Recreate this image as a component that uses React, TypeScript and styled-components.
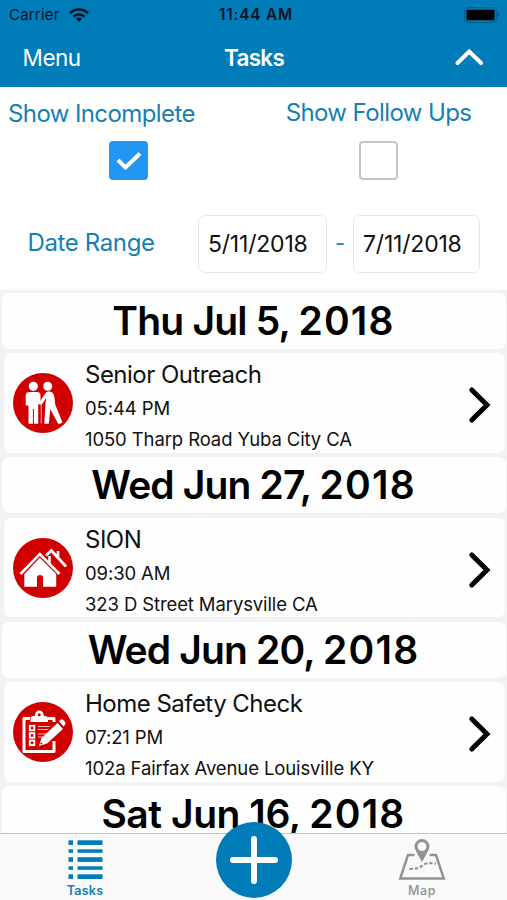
import React from "react";
import styled, { createGlobalStyle } from "styled-components";

const BLUE = "#007cb8";
const RED = "#d00000";

const GlobalStyle = createGlobalStyle`
  * { box-sizing: border-box; }
  body {
    margin: 0;
    background: #fff;
    color: #111;
    font-family: Inter, "Liberation Sans", sans-serif;
  }
`;

const Screen = styled.div`
  display: flex;
  flex-direction: column;
  width: 507px;
  height: 900px;
  overflow: hidden;
  white-space: nowrap;
`;

const Header = styled.header`
  flex: none;
  height: 87px;
  background: ${BLUE};
`;

const StatusBar = styled.div`
  display: grid;
  grid-template-columns: 1fr auto 1fr;
  align-items: center;
  height: 30px;
  padding: 0 7px 0 9px;
  font-size: 15px;
  line-height: 30px;
  color: #03141f;
`;

const Carrier = styled.div`
  display: flex;
  align-items: center;
  gap: 9px;
  letter-spacing: 0.2px;
`;

const Clock = styled.div`
  padding-left: 3px;
  font-size: 15.3px;
  font-weight: 600;
  letter-spacing: 0.85px;
`;

const BatterySlot = styled.div`
  display: flex;
  justify-content: flex-end;
`;

const NavBar = styled.div`
  display: grid;
  grid-template-columns: 1fr auto 1fr;
  align-items: center;
  height: 56px;
  padding: 0 22px 0 22px;
  font-size: 22.5px;
  line-height: 56px;
  color: #fff;
`;

const MenuButton = styled.div`
  padding-left: 0.6px;
  letter-spacing: -0.5px;
`;

const Title = styled.div`
  padding-left: 1px;
  font-weight: 600;
  letter-spacing: -0.7px;
`;

const Collapse = styled.div`
  display: flex;
  justify-content: flex-end;
`;

const Filters = styled.section`
  display: flex;
  flex-direction: column;
  flex: none;
  height: 203px;
  color: #1580b4;
`;

const Toggles = styled.div`
  display: grid;
  grid-template-columns: 257px 243px;
  height: 128px;
  padding-top: 11px;
`;

const Toggle = styled.div<{ $start?: boolean }>`
  display: flex;
  flex-direction: column;
  align-items: center;
  justify-content: space-between;
  height: 82px;
  padding-top: ${(p) => (p.$start ? 1 : 0)}px;
`;

const ToggleLabel = styled.div<{ $start?: boolean }>`
  align-self: ${(p) => (p.$start ? "flex-start" : "center")};
  padding-left: ${(p) => (p.$start ? 8 : 0)}px;
  font-size: 24px;
  line-height: 30px;
  letter-spacing: -0.6px;
`;

const Checkbox = styled.div<{ $on?: boolean }>`
  display: flex;
  align-items: center;
  justify-content: center;
  width: 39px;
  height: 39px;
  border: 2px solid ${(p) => (p.$on ? "#2196f3" : "#c6c6c6")};
  border-radius: 4px;
  background: ${(p) => (p.$on ? "#2196f3" : "#fff")};
`;

const DateRow = styled.div`
  display: flex;
  align-items: center;
  height: 58px;
  padding-left: 27.5px;
  font-size: 24px;
`;

const DateLabel = styled.div`
  width: 170.5px;
  line-height: 30px;
  padding-bottom: 2px;
  letter-spacing: -0.37px;
`;

const DateInput = styled.div<{ $width: number }>`
  width: ${(p) => p.$width}px;
  height: 58px;
  padding-left: 9px;
  border: 1.5px solid #e6e6e6;
  border-radius: 7px;
  font-size: 23px;
  line-height: 57px;
  letter-spacing: -0.2px;
  color: #111;
`;

const Dash = styled.div`
  width: 26px;
  padding-bottom: 2px;
  text-align: center;
  font-size: 22px;
`;

const TaskList = styled.main`
  display: flex;
  flex: none;
  flex-direction: column;
  height: 543px;
  padding-top: 2.5px;
  overflow: hidden;
  background: #f2f2f2;
`;

const DayHeading = styled.h2<{ $tracking: number }>`
  flex: none;
  height: 56px;
  margin: 0 1.5px 4.5px;
  border-radius: 7px;
  background: #fefefe;
  font-size: 39px;
  font-weight: 600;
  line-height: 55px;
  letter-spacing: ${(p) => p.$tracking}px;
  text-align: center;
  color: #000;
`;

const Year = styled.span`
  letter-spacing: 1.2px;
`;

const TaskCard = styled.article`
  display: grid;
  grid-template-columns: 81px 1fr auto;
  flex: none;
  height: 99.8px;
  margin: 0 2px 4.3px 3.5px;
  padding: 0 13px 0 0;
  border-radius: 7px;
  background: #fefefe;
`;

const IconSlot = styled.div`
  display: flex;
  align-items: center;
  padding-left: 9px;
`;

const TaskText = styled.div`
  padding-top: 6px;
`;

const TaskName = styled.div`
  padding-left: 0.5px;
  font-size: 24px;
  line-height: 31px;
  letter-spacing: -0.52px;
`;

const TaskDetail = styled.div<{ $gap: number }>`
  margin-top: ${(p) => p.$gap}px;
  padding-left: 0.5px;
  font-size: 18.5px;
  line-height: 27px;
  letter-spacing: -0.11px;
`;

const ChevronSlot = styled.div`
  display: flex;
  align-items: center;
  padding-top: 4px;
`;

const TabBar = styled.nav`
  display: grid;
  grid-template-columns: 170px 167px 170px;
  justify-items: center;
  flex: none;
  height: 67px;
  border-top: 1px solid #c4c4c4;
  background: #f9f9f9;
`;

const Tab = styled.div<{ $active?: boolean }>`
  display: flex;
  flex-direction: column;
  align-items: center;
  padding-top: 4px;
  font-size: 12.5px;
  font-weight: ${(p) => (p.$active ? 600 : 500)};
  line-height: 16px;
  letter-spacing: ${(p) => (p.$active ? 0.25 : 0.6)}px;
  color: ${(p) => (p.$active ? "#1580b4" : "#929292")};
`;

const AddButton = styled.div`
  z-index: 1;
  display: flex;
  align-items: center;
  justify-content: center;
  width: 76px;
  height: 76px;
  margin-top: -12.5px;
  border-radius: 50%;
  background: ${BLUE};
`;

const TabIcon = styled.svg`
  display: block;
  margin-bottom: 3px;
`;

const WifiIcon = () => (
  <svg width="20" height="14" viewBox="0 0 20 14" fill="none" stroke="#03141f" strokeWidth="2.5">
    <path d="M1 5.3C6 .3 14 .3 19 5.3" />
    <path d="M4.4 8.7c3.2-3 8-3 11.2 0" />
    <path d="M10 13.7 6.9 10.7c1.8-1.5 4.4-1.5 6.2 0Z" fill="#03141f" stroke="none" />
  </svg>
);

const BatteryIcon = () => (
  <svg width="36" height="16" viewBox="0 0 36 16">
    <rect x=".7" y=".7" width="31.6" height="14.6" rx="3" fill="none" stroke="#045f8d" strokeWidth="1.2" />
    <rect x="2.5" y="2.8" width="28" height="10.4" rx="1" fill="#000" />
    <path d="M33.5 5.7c2.4.8 2.4 3.8 0 4.6Z" fill="#04527a" />
  </svg>
);

const EldersIcon = () => (
  <svg width="60" height="60" viewBox="0 0 60 60">
    <circle cx="30" cy="30" r="30" fill={RED} />
    <g fill="#fff">
      <circle cx="20.3" cy="13.3" r="4.6" />
      <path d="M16.500 19h7.800c2 0 3.200 1.400 3.200 3.200V30h-2.300v20.800h-4.300V36h-1v14.800h-4.400V32.500H12.700V22.300c0-2 1.500-3.300 3.800-3.300Z" />
      <circle cx="34.700" cy="13.200" r="4.500" />
      <path d="M33 19.500c1.500-1.500 5.500-1.300 7 .8 1.200 1.800 2 6 2.200 11.200l7.300 18-4 1.700-8.200-15-1.500 14.600h-4.500l1.200-20.300.7-5.500-4.700 7-5-1.200 1.800-2.500 2-.3Z" />
    </g>
    <path d="M28.300 31v19.500" stroke="#f2a0a0" strokeWidth="1.200" />
  </svg>
);

const HousesIcon = () => (
  <svg width="60" height="60" viewBox="0 0 60 60">
    <circle cx="30" cy="30" r="30" fill={RED} />
    <path d="m33 17.500 5.300-5L53 28.500M45 18.500v-5.500" fill="none" stroke="#fff" strokeWidth="2.700" />
    <path d="M7.500 36 26.800 16 46.500 36" fill="none" stroke="#fff" strokeWidth="2.600" />
    <path d="m11.300 36 15.500-16.200L43.200 36v12.700H30V39.500c0-3.500-6-3.500-6 0v9.200H11.300Z" fill="#fff" />
    <path d="M36.500 18v8" stroke="#fff" strokeWidth="2.600" />
  </svg>
);

const ClipboardIcon = () => (
  <svg width="60" height="60" viewBox="0 0 60 60">
    <circle cx="30" cy="30" r="30" fill={RED} />
    <path d="M17 16.500h-6v33h30V39M35 16.500h6V20" fill="none" stroke="#fff" strokeWidth="3" strokeLinejoin="round" />
    <path d="M17.500 20v-3.500c0-1.500 1-2.500 3-2.500h1.300c0-7.500 9-7.500 9 0H32c2 0 3 1 3 2.500V20Z" fill="#fff" />
    <circle cx="26.200" cy="12.800" r="1.500" fill={RED} />
    <g fill="none" stroke="#fff" strokeWidth="1.900">
      <rect x="16.800" y="23.800" width="4.500" height="4.500" />
      <rect x="16.800" y="31.200" width="4.500" height="4.500" />
      <rect x="16.800" y="38.600" width="4.500" height="4.500" />
    </g>
    <path d="M25 24.500h12M25 27.500h10.500M25 32h8M25 35h5" stroke="#f5baba" strokeWidth="1.200" />
    <path d="m26 44 2.500-8L44.500 21l5.500 6-16 14.500ZM46 19.500l2-2c1.500-1 5.500 3 4.500 4.800l-2 2.200Z" fill="#fff" />
    <circle cx="28.300" cy="41.600" r="1" fill={RED} />
  </svg>
);

const ListIcon = () => (
  <TabIcon width="35" height="42" viewBox="0 0 35 42" fill={BLUE}>
    {[2.3, 19.2, 36.3].map((y) => (
      <React.Fragment key={y}>
        <rect x=".5" y={y} width="4.500" height="4.700" />
        <rect x="9.500" y={y} width="25" height="4.700" />
      </React.Fragment>
    ))}
    {[11.3, 28.3].map((y) => (
      <React.Fragment key={y}>
        <rect x=".5" y={y} width="4.500" height="3.500" />
        <rect x="9.500" y={y} width="25" height="3.500" />
      </React.Fragment>
    ))}
  </TabIcon>
);

const MapIcon = () => (
  <TabIcon width="48" height="42" viewBox="0 0 48 42" fill="none" stroke="#929292">
    <path d="M16.500 17H10L2.200 40.500h43.600L38 17h-6.500" strokeWidth="2.400" />
    <circle cx="24" cy="8.500" r="6" strokeWidth="3" />
    <path d="M17.500 12.500 24 24l6.500-11.500c-3 4-10 4-13 0Z" fill="#929292" stroke="none" />
    <path d="M11.500 31.200c5-1 8 .3 12-3s7-3.700 14.500-2.500" strokeWidth="2.200" strokeDasharray="3.300 2" />
  </TabIcon>
);

type Kind = "elders" | "houses" | "clipboard";

const icons: Record<Kind, React.FC> = {
  elders: EldersIcon,
  houses: HousesIcon,
  clipboard: ClipboardIcon,
};

type Task = { kind: Kind; name: string; time: string; address: string };

const days: { day: string; tracking: number; task?: Task }[] = [
  {
    day: "Thu Jul 5",
    tracking: -0.8,
    task: { kind: "elders", name: "Senior Outreach", time: "05:44 PM", address: "1050 Tharp Road Yuba City CA" },
  },
  {
    day: "Wed Jun 27",
    tracking: -0.85,
    task: { kind: "houses", name: "SION", time: "09:30 AM", address: "323 D Street Marysville CA" },
  },
  {
    day: "Wed Jun 20",
    tracking: -0.85,
    task: { kind: "clipboard", name: "Home Safety Check", time: "07:21 PM", address: "102a Fairfax Avenue Louisville KY" },
  },
  { day: "Sat Jun 16", tracking: -0.45 },
];

const TaskItem = ({ task }: { task: Task }) => {
  const Icon = icons[task.kind];
  return (
    <TaskCard>
      <IconSlot>
        <Icon />
      </IconSlot>
      <TaskText>
        <TaskName>{task.name}</TaskName>
        <TaskDetail $gap={5}>{task.time}</TaskDetail>
        <TaskDetail $gap={4}>{task.address}</TaskDetail>
      </TaskText>
      <ChevronSlot>
        <svg width="24" height="38" viewBox="0 0 24 38" fill="none" stroke="#000" strokeWidth="5" strokeLinecap="round">
          <path d="M3.800 4 19 19 3.800 34" />
        </svg>
      </ChevronSlot>
    </TaskCard>
  );
};

export default function App() {
  return (
    <>
      <GlobalStyle />
      <Screen>
        <Header>
          <StatusBar>
            <Carrier>
              Carrier
              <WifiIcon />
            </Carrier>
            <Clock>11:44 AM</Clock>
            <BatterySlot>
              <BatteryIcon />
            </BatterySlot>
          </StatusBar>
          <NavBar>
            <MenuButton>Menu</MenuButton>
            <Title>Tasks</Title>
            <Collapse>
              <svg width="32" height="22" viewBox="0 0 32 22" fill="none" stroke="#fff" strokeWidth="4" strokeLinecap="round">
                <path d="M4.500 16 16.300 4.500 28 16" />
              </svg>
            </Collapse>
          </NavBar>
        </Header>

        <Filters>
          <Toggles>
            <Toggle $start>
              <ToggleLabel $start>Show Incomplete</ToggleLabel>
              <Checkbox $on>
                <svg width="26" height="20" viewBox="0 0 26 20" fill="none" stroke="#fff" strokeWidth="4">
                  <path d="m2 9 7.500 7.500L24 2.500" />
                </svg>
              </Checkbox>
            </Toggle>
            <Toggle>
              <ToggleLabel>Show Follow Ups</ToggleLabel>
              <Checkbox />
            </Toggle>
          </Toggles>
          <DateRow>
            <DateLabel>Date Range</DateLabel>
            <DateInput $width={129}>5/11/2018</DateInput>
            <Dash>-</Dash>
            <DateInput $width={127}>7/11/2018</DateInput>
          </DateRow>
        </Filters>

        <TaskList>
          {days.map(({ day, tracking, task }) => (
            <React.Fragment key={day}>
              <DayHeading $tracking={tracking}>
                {day}, <Year>2018</Year>
              </DayHeading>
              {task && <TaskItem task={task} />}
            </React.Fragment>
          ))}
        </TaskList>

        <TabBar>
          <Tab $active>
            <ListIcon />
            Tasks
          </Tab>
          <AddButton>
            <svg width="52" height="52" viewBox="0 0 52 52" stroke="#fff" strokeWidth="6" strokeLinecap="round">
              <path d="M26 5v42M5 26h42" />
            </svg>
          </AddButton>
          <Tab>
            <MapIcon />
            Map
          </Tab>
        </TabBar>
      </Screen>
    </>
  );
}
